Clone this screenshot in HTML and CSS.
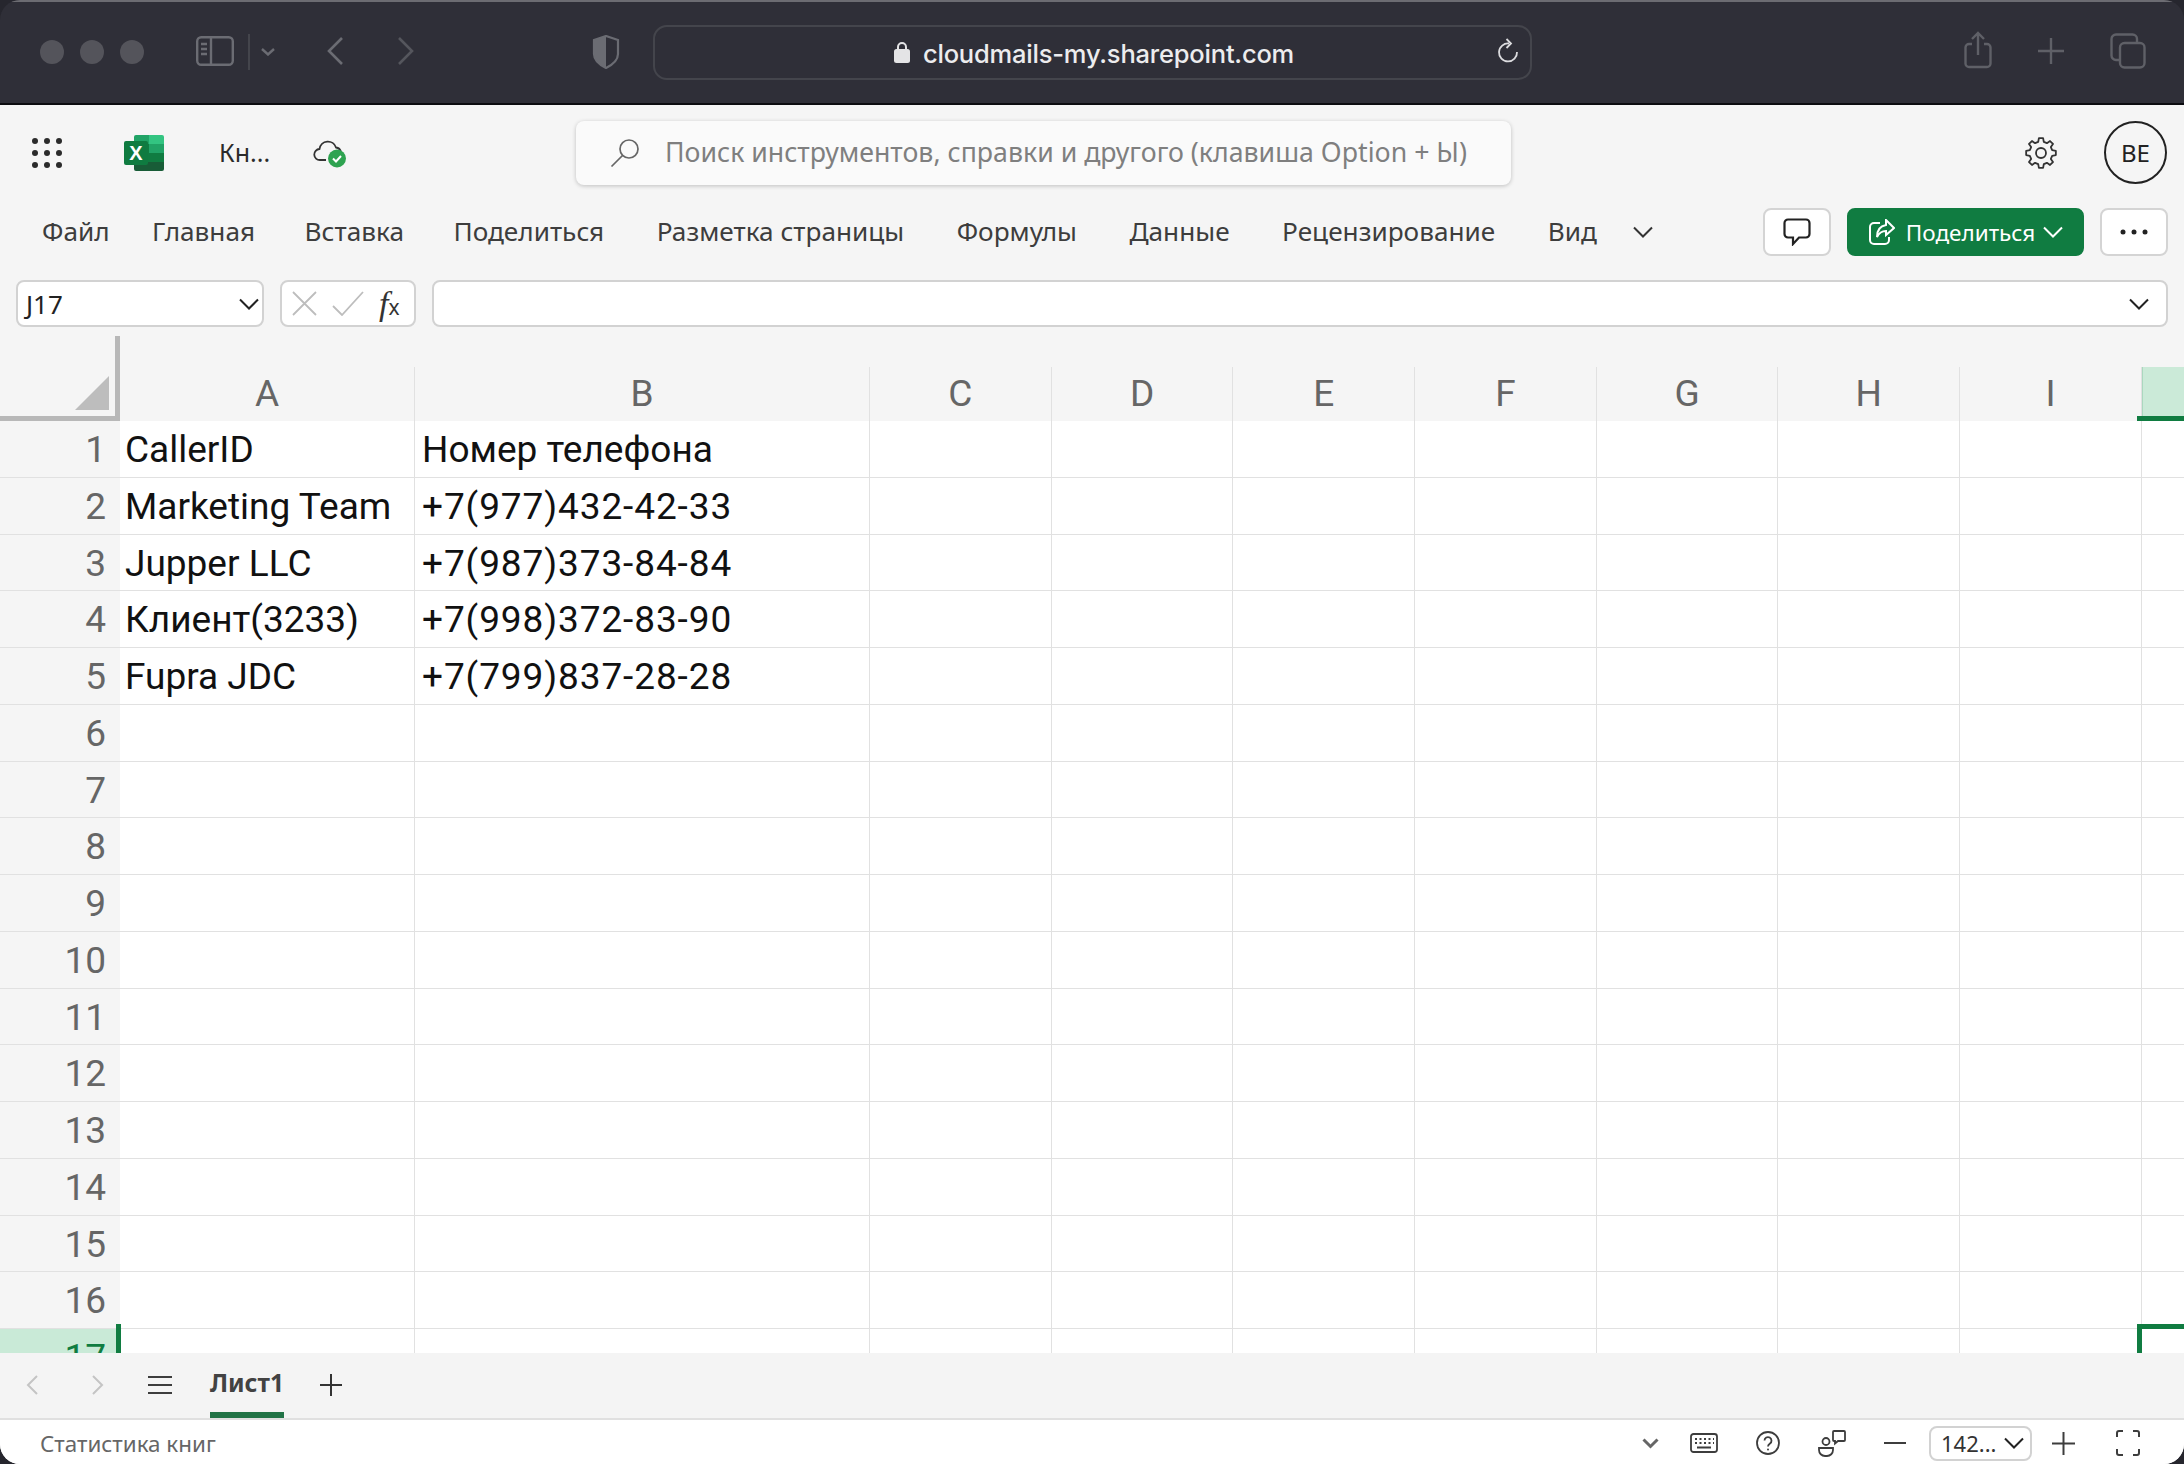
FILE: index.html
```html
<!DOCTYPE html>
<html lang="ru">

<head>
    <meta charset="UTF-8" />
    <title>Книга</title>
    <link rel="stylesheet" href="styles.css">
</head>

<body>
    <div class="window">
        <!-- safari toolbar -->
        <div class="safari">
            <span class="dot dot-first"></span>
            <span class="dot"></span>
            <span class="dot"></span>
            <svg class="sb-icon" width="38" height="30" viewBox="0 0 38 30" fill="none" stroke="#6b6c73" stroke-width="2.4">
                <rect x="1.2" y="1.2" width="35.6" height="27.6" rx="4" />
                <path d="M15 1v28M5 8h6M5 13h6M5 18h6" />
            </svg>
            <span class="sb-divider"></span>
            <svg class="sb-chevron" width="14" height="8" viewBox="0 0 14 8" fill="none" stroke="#6b6c73" stroke-width="2.4">
                <path d="M1 1l6 5.5L13 1" />
            </svg>
            <svg class="nav-back" width="18" height="30" viewBox="0 0 18 30" fill="none" stroke="#6b6c73" stroke-width="2.6">
                <path d="M16 2L3 15l13 13" />
            </svg>
            <svg class="nav-forward" width="18" height="30" viewBox="0 0 18 30" fill="none" stroke="#55565d" stroke-width="2.6">
                <path d="M2 2l13 13L2 28" />
            </svg>
            <svg class="shield" width="28" height="34" viewBox="0 0 28 34">
                <path d="M14 1L2 5v14c0 6 6 11 12 14 6-3 12-8 12-14V5z" fill="none" stroke="#6b6c73" stroke-width="2.2" />
                <path d="M14 1L2 5v14c0 6 6 11 12 14z" fill="#6b6c73" />
            </svg>
            <div class="address">
                <svg class="lock" width="16" height="22" viewBox="0 0 16 22">
                    <path d="M4 9V6a4 4 0 0 1 8 0v3" fill="none" stroke="#e4e4e6" stroke-width="2" />
                    <rect x="0" y="8" width="16" height="14" rx="2.5" fill="#e4e4e6" />
                </svg>
                <span class="url">cloudmails-my.sharepoint.com</span>
                <svg class="reload" width="22" height="26" viewBox="0 0 22 26" fill="none" stroke="#dcdcdf" stroke-width="1.8">
                    <path d="M12 5.5A9 9 0 1 0 20 14" />
                    <path d="M9.5 1L14 5.5 9.5 10" />
                </svg>
            </div>
            <svg class="share-icon" width="28" height="38" viewBox="0 0 28 38" fill="none" stroke="#5f6067" stroke-width="2.4">
                <path d="M8 13H5a3.500 3.500 0 0 0-3.500 3.500v16A3.500 3.500 0 0 0 5 36h18a3.500 3.500 0 0 0 3.500-3.500v-16A3.500 3.500 0 0 0 23 13h-3" />
                <path d="M14 24V2M8 8l6-6 6 6" />
            </svg>
            <svg class="plus-icon" width="28" height="28" viewBox="0 0 28 28" stroke="#5f6067" stroke-width="2.4">
                <path d="M14 1v26M1 14h26" />
            </svg>
            <svg class="tabs-icon" width="36" height="36" viewBox="0 0 36 36" fill="none" stroke="#5f6067" stroke-width="2.4">
                <rect x="10" y="10" width="24.500" height="24.500" rx="4.500" />
                <path d="M10 27H6a4.500 4.500 0 0 1-4.500-4.500V6A4.500 4.500 0 0 1 6 1.500h16.500A4.500 4.500 0 0 1 27 6v4" />
            </svg>
        </div>

        <div class="app">
            <!-- title row -->
            <div class="titlebar">
                <svg class="waffle" width="30" height="30" viewBox="0 0 30 30" fill="#2b2b2b">
                    <circle cx="3" cy="3" r="3" /><circle cx="15" cy="3" r="3" /><circle cx="27" cy="3" r="3" />
                    <circle cx="3" cy="15" r="3" /><circle cx="15" cy="15" r="3" /><circle cx="27" cy="15" r="3" />
                    <circle cx="3" cy="27" r="3" /><circle cx="15" cy="27" r="3" /><circle cx="27" cy="27" r="3" />
                </svg>
                <svg class="excel" width="40" height="36" viewBox="0 0 40 36">
                    <path d="M12 0h13v9H10V2a2 2 0 0 1 2-2z" fill="#21a366" />
                    <path d="M25 0h13a2 2 0 0 1 2 2v7H25z" fill="#33c481" />
                    <rect x="10" y="9" width="15" height="9" fill="#107c41" />
                    <rect x="25" y="9" width="15" height="9" fill="#21a366" />
                    <rect x="10" y="18" width="15" height="9" fill="#107c41" />
                    <rect x="25" y="18" width="15" height="9" fill="#107c41" />
                    <path d="M10 27h30v7a2 2 0 0 1-2 2H12a2 2 0 0 1-2-2z" fill="#185c37" />
                    <rect x="0" y="6" width="24" height="24" rx="2" fill="#0f7b40" />
                    <text x="12" y="25" text-anchor="middle" class="excel-x">X</text>
                </svg>
                <span class="doc-name">Кн...</span>
                <svg class="cloud" width="34" height="32" viewBox="0 0 34 32" fill="none">
                    <path d="M13 23H7a5.500 5.500 0 0 1-.5-11A8.500 8.500 0 0 1 23 10.500 6 6 0 0 1 28 15" stroke="#333" stroke-width="1.8" />
                    <circle cx="24" cy="21.500" r="9" fill="#2ea350" />
                    <path d="M20 21.500l3 3 5-5.500" stroke="#fff" stroke-width="2" />
                </svg>
                <div class="search">
                    <svg width="30" height="30" viewBox="0 0 30 30" fill="none" stroke="#666" stroke-width="1.700">
                        <circle cx="19" cy="11" r="9" />
                        <path d="M12.500 17.500L1.500 28.500" />
                    </svg>
                    <span class="search-text">Поиск инструментов, справки и другого (клавиша Option + Ы)</span>
                </div>
                <svg class="gear" width="32" height="32" viewBox="0 0 32 32" fill="none" stroke="#333" stroke-width="1.800" stroke-linejoin="round">
                    <path d="M13.200 4.840L13.900 1.150H18.100L18.800 4.840L21.900 6.140L25.030 4.020L27.980 6.970L25.860 10.080L27.160 13.200L30.850 13.900V18.100L27.160 18.800L25.860 21.920L27.980 25.030L25.030 27.980L21.900 25.860L18.800 27.160L18.100 30.850H13.900L13.200 27.160L10.100 25.860L6.970 27.980L4.020 25.030L6.140 21.900L4.840 18.800L1.150 18.100V13.900L4.840 13.200L6.140 10.100L4.020 6.970L6.970 4.020L10.100 6.140Z" />
                    <circle cx="16" cy="16" r="5" />
                </svg>
                <div class="avatar">BE</div>
            </div>

            <!-- ribbon tabs -->
            <div class="ribbon">
                <span class="ribbon-tab ribbon-first">Файл</span>
                <span class="ribbon-tab ribbon-tight">Главная</span>
                <span class="ribbon-tab ribbon-tight">Вставка</span>
                <span class="ribbon-tab">Поделиться</span>
                <span class="ribbon-tab">Разметка страницы</span>
                <span class="ribbon-tab">Формулы</span>
                <span class="ribbon-tab">Данные</span>
                <span class="ribbon-tab">Рецензирование</span>
                <span class="ribbon-tab">Вид</span>
                <svg class="ribbon-more" width="20" height="12" viewBox="0 0 20 12" fill="none" stroke="#333" stroke-width="2">
                    <path d="M1 1.500l9 9 9-9" />
                </svg>
                <div class="ribbon-actions">
                    <button class="btn btn-comment">
                        <svg width="28" height="28" viewBox="0 0 28 28" fill="none" stroke="#222" stroke-width="2.200">
                            <path d="M5 1.500h18A3.500 3.500 0 0 1 26.500 5v11a3.500 3.500 0 0 1-3.500 3.500h-7L10 26v-6.500H5A3.500 3.500 0 0 1 1.500 16V5A3.500 3.500 0 0 1 5 1.500z" />
                        </svg>
                    </button>
                    <button class="btn btn-share">
                        <svg width="26" height="26" viewBox="0 0 26 26" fill="none" stroke="#fff" stroke-width="2">
                            <path d="M11 4H5a4 4 0 0 0-4 4v13a4 4 0 0 0 4 4h11a4 4 0 0 0 4-4v-3" />
                            <path d="M17 1l8 8-8 7v-4c-5 0-7 2-9 6 0-7 3-11 9-12z" />
                        </svg>
                        <span>Поделиться</span>
                        <svg class="share-chevron" width="20" height="12" viewBox="0 0 20 12" fill="none" stroke="#fff" stroke-width="2">
                            <path d="M1 1.500l9 9 9-9" />
                        </svg>
                    </button>
                    <button class="btn btn-more">
                        <svg width="28" height="6" viewBox="0 0 28 6" fill="#222">
                            <circle cx="3" cy="3" r="2.500" /><circle cx="14" cy="3" r="2.500" /><circle cx="25" cy="3" r="2.500" />
                        </svg>
                    </button>
                </div>
            </div>

            <!-- formula bar -->
            <div class="formula-row">
                <div class="box name-box">
                    <span>J17</span>
                    <svg width="20" height="12" viewBox="0 0 20 12" fill="none" stroke="#222" stroke-width="2">
                        <path d="M1 1.500l9 9 9-9" />
                    </svg>
                </div>
                <div class="box fn-box">
                    <svg width="25" height="25" viewBox="0 0 25 25" stroke="#bdbdbd" stroke-width="1.800">
                        <path d="M1 1l23 23M24 1L1 24" />
                    </svg>
                    <svg width="32" height="25" viewBox="0 0 32 25" fill="none" stroke="#bdbdbd" stroke-width="1.800">
                        <path d="M1 15l9 9L31 1" />
                    </svg>
                    <span class="fx">f<span class="fx-x">x</span></span>
                </div>
                <div class="box formula-input">
                    <svg width="20" height="12" viewBox="0 0 20 12" fill="none" stroke="#222" stroke-width="2">
                        <path d="M1 1.500l9 9 9-9" />
                    </svg>
                </div>
            </div>

            <!-- sheet -->
            <div class="sheet">
                <div class="corner"><span class="corner-tri"></span></div>
                <div class="col-heads">
                    <div class="row-spacer"></div>
                    <div class="col-a">A</div>
                    <div class="col-b">B</div>
                    <div class="col">C</div>
                    <div class="col">D</div>
                    <div class="col">E</div>
                    <div class="col">F</div>
                    <div class="col">G</div>
                    <div class="col">H</div>
                    <div class="col">I</div>
                    <div class="col-active"></div>
                </div>
                <div class="rows">
                    <div class="row"><div class="rh">1</div><div class="cell col-a">CallerID</div><div class="cell col-b">Номер телефона</div><div class="rest"></div></div>
                    <div class="row"><div class="rh">2</div><div class="cell col-a">Marketing Team</div><div class="cell col-b phone">+7(977)432-42-33</div><div class="rest"></div></div>
                    <div class="row"><div class="rh">3</div><div class="cell col-a">Jupper LLC</div><div class="cell col-b phone">+7(987)373-84-84</div><div class="rest"></div></div>
                    <div class="row"><div class="rh">4</div><div class="cell col-a">Клиент(3233)</div><div class="cell col-b phone">+7(998)372-83-90</div><div class="rest"></div></div>
                    <div class="row"><div class="rh">5</div><div class="cell col-a">Fupra JDC</div><div class="cell col-b phone">+7(799)837-28-28</div><div class="rest"></div></div>
                    <div class="row"><div class="rh">6</div><div class="cell col-a"></div><div class="cell col-b"></div><div class="rest"></div></div>
                    <div class="row"><div class="rh">7</div><div class="cell col-a"></div><div class="cell col-b"></div><div class="rest"></div></div>
                    <div class="row"><div class="rh">8</div><div class="cell col-a"></div><div class="cell col-b"></div><div class="rest"></div></div>
                    <div class="row"><div class="rh">9</div><div class="cell col-a"></div><div class="cell col-b"></div><div class="rest"></div></div>
                    <div class="row"><div class="rh">10</div><div class="cell col-a"></div><div class="cell col-b"></div><div class="rest"></div></div>
                    <div class="row"><div class="rh">11</div><div class="cell col-a"></div><div class="cell col-b"></div><div class="rest"></div></div>
                    <div class="row"><div class="rh">12</div><div class="cell col-a"></div><div class="cell col-b"></div><div class="rest"></div></div>
                    <div class="row"><div class="rh">13</div><div class="cell col-a"></div><div class="cell col-b"></div><div class="rest"></div></div>
                    <div class="row"><div class="rh">14</div><div class="cell col-a"></div><div class="cell col-b"></div><div class="rest"></div></div>
                    <div class="row"><div class="rh">15</div><div class="cell col-a"></div><div class="cell col-b"></div><div class="rest"></div></div>
                    <div class="row"><div class="rh">16</div><div class="cell col-a"></div><div class="cell col-b"></div><div class="rest"></div></div>
                    <div class="row"><div class="rh rh-active">17</div><div class="cell col-a"></div><div class="cell col-b"></div><div class="rest"></div></div>
                </div>
                <span class="sel-head"></span>
                <span class="sel-left"></span>
                <span class="sel-cell"></span>
            </div>

            <!-- sheet tabs -->
            <div class="tabs">
                <svg class="tab-prev" width="12" height="20" viewBox="0 0 12 20" fill="none" stroke="#c4c4c4" stroke-width="2">
                    <path d="M11 1L2 10l9 9" />
                </svg>
                <svg class="tab-next" width="12" height="20" viewBox="0 0 12 20" fill="none" stroke="#c4c4c4" stroke-width="2">
                    <path d="M1 1l9 9-9 9" />
                </svg>
                <svg class="tab-menu" width="24" height="20" viewBox="0 0 24 20" stroke="#3d3d3d" stroke-width="2">
                    <path d="M0 2h24M0 10h24M0 18h24" />
                </svg>
                <div class="tab-active">Лист1</div>
                <svg class="tab-add" width="22" height="22" viewBox="0 0 22 22" stroke="#333" stroke-width="2">
                    <path d="M11 0v22M0 11h22" />
                </svg>
            </div>

            <!-- status bar -->
            <div class="status">
                <span class="status-text">Статистика книг</span>
                <svg class="st-chevron" width="17" height="11" viewBox="0 0 17 11" fill="none" stroke="#666" stroke-width="3">
                    <path d="M1.500 1.500l7 7 7-7" />
                </svg>
                <svg class="st-keyboard" width="28" height="20" viewBox="0 0 28 20" fill="none" stroke="#3d3d3d" stroke-width="1.800">
                    <rect x="1" y="1" width="26" height="18" rx="2.500" />
                    <path d="M5 6h2M9.500 6h2M14 6h2M18.500 6h2M23 6h1M5 10h2M9.500 10h2M14 10h2M18.500 10h2M23 10h1M7 14.500h14" />
                </svg>
                <svg class="st-help" width="24" height="24" viewBox="0 0 24 24" fill="none" stroke="#3d3d3d" stroke-width="1.800">
                    <circle cx="12" cy="12" r="11" />
                    <path d="M8.500 9.500a3.500 3.500 0 1 1 5.500 3c-1.300.9-2 1.400-2 3" />
                    <circle cx="12" cy="18.500" r="1" fill="#3d3d3d" stroke="none" />
                </svg>
                <svg class="st-feedback" width="28" height="27" viewBox="0 0 28 27" fill="none" stroke="#3d3d3d" stroke-width="1.800">
                    <circle cx="8" cy="11.500" r="3.500" />
                    <path d="M1 18h14v2a6 6 0 0 1-6 6H7a6 6 0 0 1-6-6z" />
                    <path d="M17 1h9a1 1 0 0 1 1 1v8a1 1 0 0 1-1 1h-6l-3 2.500V11h-1a1 1 0 0 1-1-1V2a1 1 0 0 1 1-1z" />
                </svg>
                <svg class="st-minus" width="22" height="2" viewBox="0 0 22 2" stroke="#3d3d3d" stroke-width="2">
                    <path d="M0 1h22" />
                </svg>
                <div class="zoom-box">
                    <span>142...</span>
                    <svg width="20" height="12" viewBox="0 0 20 12" fill="none" stroke="#222" stroke-width="2">
                        <path d="M1 1.500l9 9 9-9" />
                    </svg>
                </div>
                <svg class="st-plus" width="23" height="23" viewBox="0 0 23 23" stroke="#3d3d3d" stroke-width="2">
                    <path d="M11.500 0v23M0 11.500h23" />
                </svg>
                <svg class="st-full" width="24" height="26" viewBox="0 0 24 26" fill="none" stroke="#3d3d3d" stroke-width="2">
                    <path d="M1 7V3a2 2 0 0 1 2-2h4M17 1h4a2 2 0 0 1 2 2v4M23 19v4a2 2 0 0 1-2 2h-4M7 25H3a2 2 0 0 1-2-2v-4" />
                </svg>
            </div>
        </div>
    </div>
</body>

</html>
```

FILE: styles.css
```css
html,
body {
    margin: 0;
    padding: 0;
    width: 2184px;
    height: 1464px;
    overflow: hidden;
    background-color: #26262e;
}

.window {
    width: 2184px;
    height: 1464px;
    display: flex;
    flex-direction: column;
    border-radius: 20px;
    overflow: hidden;
    font-family: "Noto Sans", sans-serif;
}

/* safari toolbar */
.safari {
    flex: 0 0 105px;
    box-sizing: border-box;
    display: flex;
    align-items: center;
    background-color: #2f2f38;
    border-top: 2px solid #6c6c72;
    border-bottom: 2px solid #0c0c10;
    padding-bottom: 1px;
}

.safari svg {
    flex: none;
}

.dot {
    width: 24px;
    height: 24px;
    border-radius: 50%;
    background-color: #54545b;
    margin-left: 16px;
    flex: none;
}

.dot-first {
    margin-left: 40px;
}

.sb-icon {
    margin-left: 52px;
    margin-bottom: 2px;
}

.sb-divider {
    width: 2px;
    height: 36px;
    margin-left: 14px;
    background-color: #44454c;
}

.sb-chevron {
    margin-left: 11px;
}

.nav-back {
    margin-left: 51px;
    margin-bottom: 2px;
}

.nav-forward {
    margin-left: 53px;
    margin-bottom: 2px;
}

.shield {
    margin-left: 177px;
}

.address {
    box-sizing: border-box;
    width: 879px;
    height: 55px;
    margin-left: 33px;
    padding-left: 3px;
    border: 2px solid #44454c;
    border-radius: 14px;
    display: flex;
    align-items: center;
    justify-content: center;
    position: relative;
    color: #ececee;
}

.lock {
    margin-right: 13px;
}

.url {
    position: relative;
    top: 1px;
    font-family: Inter, sans-serif;
    font-size: 25.5px;
    font-weight: 500;
    letter-spacing: -0.2px;
}

.reload {
    position: absolute;
    right: 11px;
    top: 11px;
}

.share-icon {
    margin-left: 432px;
    margin-bottom: 4px;
}

.plus-icon {
    margin-left: 45px;
    margin-bottom: 3px;
}

.tabs-icon {
    margin-left: 45px;
    margin-bottom: 3px;
}

/* excel */
.app {
    flex: 1;
    min-height: 0;
    display: flex;
    flex-direction: column;
    background-color: #f5f5f5;
}

.titlebar {
    flex: 0 0 95px;
    display: flex;
    align-items: center;
    position: relative;
}

.titlebar svg {
    flex: none;
}

.waffle {
    margin-left: 32px;
}

.excel {
    margin-left: 62px;
}

.excel-x {
    font-family: "Liberation Sans", sans-serif;
    font-size: 20px;
    font-weight: bold;
    fill: #fff;
}

.doc-name {
    position: relative;
    top: -1px;
    margin-left: 55px;
    font-size: 25px;
    color: #2b2b2b;
    width: 60px;
}

.cloud {
    margin-left: 34px;
}

.search {
    box-sizing: border-box;
    width: 935px;
    height: 64px;
    margin-left: 229px;
    padding-left: 34px;
    display: flex;
    align-items: center;
    gap: 25px;
    background-color: #fafafa;
    border-radius: 8px;
    box-shadow: 0 1px 4px rgba(0, 0, 0, 0.22);
    color: #7f7f7f;
    font-size: 26.7px;
    white-space: nowrap;
}

.search-text {
    position: relative;
    top: -1px;
}

.gear {
    margin-left: 514px;
}

.avatar {
    box-sizing: border-box;
    width: 63px;
    height: 63px;
    margin-left: 47px;
    border: 2px solid #222;
    border-radius: 50%;
    display: flex;
    align-items: center;
    justify-content: center;
    font-size: 24px;
    color: #222;
}

.ribbon {
    flex: 0 0 64px;
    box-sizing: border-box;
    padding-left: 42px;
    display: flex;
    align-items: center;
    gap: 52.5px;
    font-size: 26.2px;
    line-height: 60px;
    color: #3d3d3d;
    white-space: nowrap;
}

.ribbon-tab {
    position: relative;
    top: -1px;
}

.ribbon-first {
    margin-right: -10px;
}

.ribbon-tight {
    margin-right: -3px;
}

.ribbon-more {
    margin-left: -16px;
}

.ribbon-actions {
    margin-left: auto;
    margin-right: 16px;
    display: flex;
    gap: 16px;
}

.btn {
    box-sizing: border-box;
    height: 48px;
    padding: 0;
    display: flex;
    align-items: center;
    justify-content: center;
    background-color: #fff;
    border: 2px solid #d4d4d4;
    border-radius: 8px;
    font-family: inherit;
}

.btn-comment,
.btn-more {
    width: 68px;
}

.btn-share {
    width: 237px;
    padding-left: 1px;
    gap: 11px;
    background-color: #107c41;
    border-color: #107c41;
    color: #fff;
    font-size: 22.5px;
}

.share-chevron {
    margin-left: -3px;
}

.formula-row {
    flex: 0 0 47px;
    margin-top: 16px;
    padding: 0 16px;
    display: flex;
    gap: 16px;
}

.box {
    box-sizing: border-box;
    height: 47px;
    background-color: #fff;
    border: 2px solid #d2d2d2;
    border-radius: 8px;
    display: flex;
    align-items: center;
}

.name-box {
    width: 248px;
    padding: 0 3px 0 8px;
    justify-content: space-between;
    font-size: 26px;
    color: #222;
}

.fn-box {
    width: 136px;
    padding-left: 10px;
    gap: 15px;
}

.fx {
    font-family: "Liberation Serif", serif;
    font-style: italic;
    font-size: 34px;
    color: #333;
}

.fx-x {
    font-family: "Noto Sans", sans-serif;
    font-style: normal;
    font-size: 21px;
}

.formula-input {
    flex: 1;
    padding-right: 17px;
    justify-content: flex-end;
}

/* sheet */
.sheet {
    flex: 1;
    min-height: 0;
    padding-top: 40px;
    position: relative;
    overflow: hidden;
    font-family: Roboto, sans-serif;
}

.corner {
    position: absolute;
    left: 0;
    top: 9px;
    box-sizing: border-box;
    width: 120px;
    height: 85px;
    border-right: 5px solid #b8b8b8;
    border-bottom: 5px solid #b8b8b8;
}

.corner-tri {
    position: absolute;
    right: 6px;
    bottom: 6px;
    width: 34px;
    height: 34px;
    background-color: #bdbdbd;
    clip-path: polygon(100% 0, 100% 100%, 0 100%);
}

.col-heads {
    height: 54px;
    display: flex;
    font-size: 37px;
    color: #666;
    text-align: center;
    line-height: 54px;
}

.row-spacer {
    flex: 0 0 120px;
}

.col-heads .col-a,
.col-heads .col-b,
.col {
    box-sizing: border-box;
    border-right: 1px solid #e1e1e1;
}

.col {
    flex: 0 0 181.7px;
}

.col-a {
    flex: 0 0 295px;
}

.col-b {
    flex: 0 0 455px;
}

.col-active {
    flex: 1;
    background-color: #cbead8;
    border-left: 1px solid #abd8bf;
}

.row {
    display: flex;
    height: 56.77px;
    box-sizing: border-box;
    background-color: #fff;
    border-bottom: 1px solid #e1e1e1;
}

.rh {
    flex: 0 0 120px;
    box-sizing: border-box;
    padding-right: 14px;
    background-color: #f5f5f5;
    text-align: right;
    font-size: 37px;
    line-height: 58px;
    color: #666;
}

.rh-active {
    background-color: #c9ead7;
    color: #107c41;
}

.cell {
    box-sizing: border-box;
    border-right: 1px solid #e1e1e1;
    font-size: 37px;
    line-height: 58px;
    color: #111;
    white-space: nowrap;
}

.cell.col-a {
    padding-left: 5px;
}

.cell.col-b {
    padding-left: 7px;
}

.phone {
    letter-spacing: 0.9px;
}

.rest {
    flex: 1;
    background-image: repeating-linear-gradient(90deg, transparent 0 180.7px, #e1e1e1 180.7px 181.7px);
}

/* selection of J17, which sits mostly below the visible rows */
.sel-head {
    position: absolute;
    left: 2137px;
    top: 89px;
    width: 47px;
    height: 5px;
    background-color: #107c41;
}

.sel-left {
    position: absolute;
    left: 116px;
    top: 997px;
    width: 5px;
    height: 40px;
    background-color: #107c41;
}

.sel-cell {
    position: absolute;
    left: 2137px;
    top: 997px;
    width: 60px;
    height: 40px;
    border-top: 5px solid #107c41;
    border-left: 5px solid #107c41;
}

.tabs {
    flex: 0 0 67px;
    box-sizing: border-box;
    display: flex;
    align-items: center;
    background-color: #f4f4f4;
    border-bottom: 2px solid #e0e0e0;
    position: relative;
    z-index: 1;
}

.tabs svg {
    position: relative;
    top: -1px;
}

.tab-prev {
    margin-left: 26px;
}

.tab-next {
    margin-left: 54px;
}

.tab-menu {
    margin-left: 44px;
}

.tab-active {
    box-sizing: border-box;
    height: 65px;
    margin-left: 38px;
    border-bottom: 6px solid #217346;
    font-size: 24.6px;
    font-weight: 700;
    line-height: 60px;
    color: #424242;
}

.tab-add {
    margin-left: 36px;
}

.status {
    flex: 0 0 44px;
    box-sizing: border-box;
    padding-top: 2px;
    display: flex;
    align-items: center;
    background-color: #fff;
}

.status svg {
    flex: none;
}

.status-text {
    margin-left: 40px;
    font-size: 22.4px;
    color: #666;
}

.st-chevron {
    margin-left: auto;
}

.st-keyboard {
    margin-left: 31px;
}

.st-help {
    margin-left: 38px;
}

.st-feedback {
    margin-left: 38px;
}

.st-minus {
    margin-left: 38px;
}

.zoom-box {
    box-sizing: border-box;
    width: 103px;
    height: 35px;
    margin-left: 23px;
    padding: 0 6px 0 10px;
    display: flex;
    align-items: center;
    justify-content: space-between;
    border: 2px solid #d2d2d2;
    border-radius: 8px;
    font-size: 22px;
    color: #333;
}

.st-plus {
    margin-left: 20px;
}

.st-full {
    margin-left: 41px;
    margin-right: 44px;
}
```
